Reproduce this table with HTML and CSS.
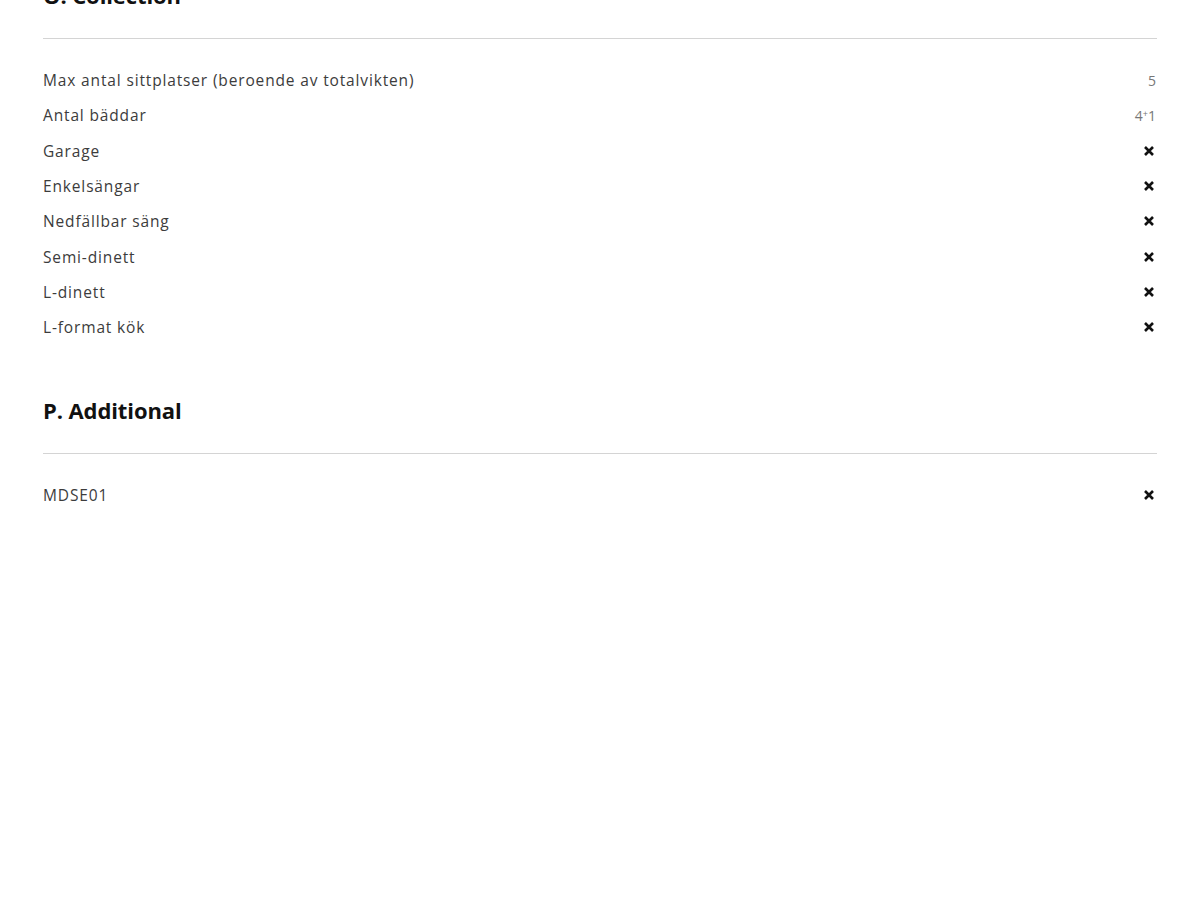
FILE: index.html
```html
<!DOCTYPE html>
<html lang="sv">
<head>
<meta charset="utf-8">
<title>Specifikationer</title>
<link rel="stylesheet" href="styles.css">
</head>
<body>
<main class="page">
  <section class="spec-section first">
    <h2 class="spec-title">O. Collection</h2>
    <ul class="spec-list">
      <li class="spec-row"><span class="label">Max antal sittplatser (beroende av totalvikten)</span><span class="value">5</span></li>
      <li class="spec-row"><span class="label">Antal bäddar</span><span class="value">4<span class="plus">+</span>1</span></li>
      <li class="spec-row"><span class="label">Garage</span><span class="cross"><svg viewBox="0 0 12 12" width="12" height="12"><path d="M2 2 L10 10 M10 2 L2 10"/></svg></span></li>
      <li class="spec-row"><span class="label">Enkelsängar</span><span class="cross"><svg viewBox="0 0 12 12" width="12" height="12"><path d="M2 2 L10 10 M10 2 L2 10"/></svg></span></li>
      <li class="spec-row"><span class="label">Nedfällbar säng</span><span class="cross"><svg viewBox="0 0 12 12" width="12" height="12"><path d="M2 2 L10 10 M10 2 L2 10"/></svg></span></li>
      <li class="spec-row"><span class="label">Semi-dinett</span><span class="cross"><svg viewBox="0 0 12 12" width="12" height="12"><path d="M2 2 L10 10 M10 2 L2 10"/></svg></span></li>
      <li class="spec-row"><span class="label">L-dinett</span><span class="cross"><svg viewBox="0 0 12 12" width="12" height="12"><path d="M2 2 L10 10 M10 2 L2 10"/></svg></span></li>
      <li class="spec-row"><span class="label">L-format kök</span><span class="cross"><svg viewBox="0 0 12 12" width="12" height="12"><path d="M2 2 L10 10 M10 2 L2 10"/></svg></span></li>
    </ul>
  </section>
  <section class="spec-section">
    <h2 class="spec-title">P. Additional</h2>
    <ul class="spec-list">
      <li class="spec-row"><span class="label">MDSE01</span><span class="cross"><svg viewBox="0 0 12 12" width="12" height="12"><path d="M2 2 L10 10 M10 2 L2 10"/></svg></span></li>
    </ul>
  </section>
</main>
</body>
</html>
```
FILE: styles.css
```css
html, body {
  margin: 0;
  padding: 0;
  background: #ffffff;
}

body {
  font-family: "Open Sans", "Lato", "Liberation Sans", sans-serif;
  color: #333333;
}

.page {
  padding: 0 43px;
  display: flex;
  flex-direction: column;
  gap: 50px;
}

.spec-section.first {
  margin-top: -20px;
}

.spec-title {
  margin: 0;
  font-size: 22px;
  line-height: 30px;
  font-weight: 700;
  color: #111111;
  padding-bottom: 28px;
  border-bottom: 1px solid #d4d4d4;
  letter-spacing: -0.1px;
}

.spec-list {
  list-style: none;
  margin: 0;
  padding: 23.5px 0 0;
}

.spec-row {
  display: flex;
  justify-content: space-between;
  align-items: center;
  height: 35.3px;
  font-size: 15.5px;
  color: #3c3c3c;
}

.label {
  letter-spacing: 0.85px;
}

.value {
  font-size: 14px;
  color: #777777;
  padding-right: 1px;
}

.plus {
  font-size: 9px;
  vertical-align: 4px;
}

.cross {
  display: flex;
  align-items: center;
  margin-right: 2px;
}

.cross svg path {
  stroke: #111111;
  stroke-width: 2.6;
  stroke-linecap: butt;
  fill: none;
}
```
